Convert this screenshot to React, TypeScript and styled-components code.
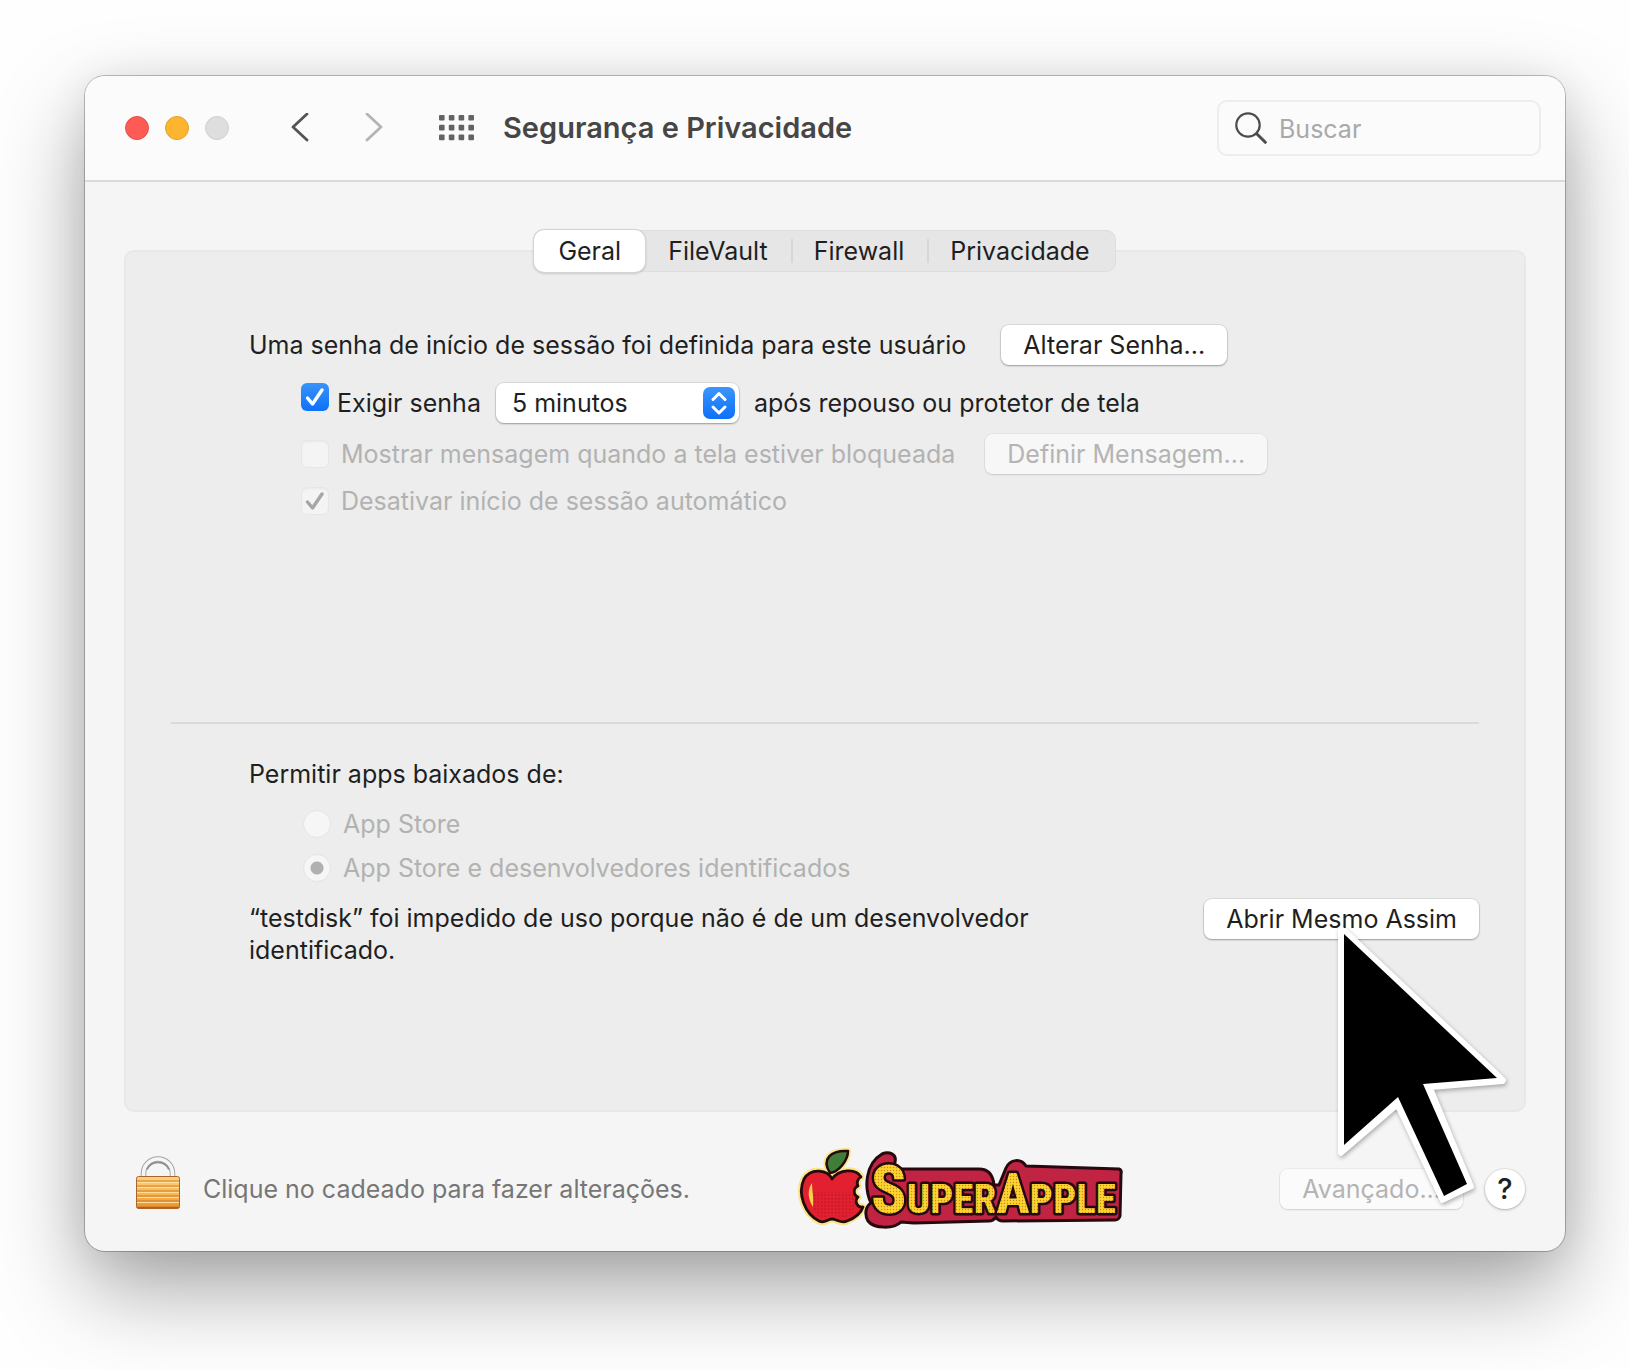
import React from 'react';
import styled, { createGlobalStyle, css } from 'styled-components';

const GlobalStyle = createGlobalStyle`
  *, *::before, *::after { box-sizing: border-box; }
  body {
    margin: 0;
    background: #fefefe;
    color: #1f1f1f;
    font-family: Inter, "Noto Sans", "Liberation Sans", sans-serif;
    font-size: 25px;
    line-height: 32px;
  }
  button, input, select { font: inherit; color: inherit; margin: 0; }
`;

const Desktop = styled.div`
  padding: 76px 64px 120px 85px;
  overflow: hidden;
`;

const Window = styled.main`
  border-radius: 20px;
  background: #f5f5f5;
  box-shadow:
    0 0 0 1px rgba(0, 0, 0, 0.24),
    0 4px 40px rgba(0, 0, 0, 0.08),
    0 38px 88px rgba(0, 0, 0, 0.35);
`;

const TitleBar = styled.header`
  display: flex;
  align-items: center;
  height: 106px;
  padding: 0 24px 0 40px;
  border-bottom: 2px solid #dadada;
  border-radius: 20px 20px 0 0;
  background: #fbfbfb;
`;

const Lights = styled.div`
  display: flex;
  gap: 16px;
`;

const Light = styled.button<{ $fill: string; $edge: string }>`
  width: 24px;
  height: 24px;
  padding: 0;
  border: 1px solid ${(p) => p.$edge};
  border-radius: 50%;
  background: ${(p) => p.$fill};
`;

const BarButton = styled.button<{ $tone: string }>`
  display: flex;
  padding: 0;
  border: 0;
  background: none;
  color: ${(p) => p.$tone};
`;

const Nav = styled.nav`
  display: flex;
  align-items: center;
  gap: 56px;
  margin: 0 28px 0 62px;
`;

const Title = styled.h1`
  flex: 1;
  margin: 0;
  color: #464646;
  font-size: 29px;
  font-weight: 600;
`;

const SearchBox = styled.label`
  display: flex;
  align-items: center;
  gap: 12px;
  width: 324px;
  height: 56px;
  padding: 0 16px;
  border: 2px solid #ededed;
  border-radius: 10px;
  color: #4c4c4c;
`;

const SearchInput = styled.input`
  flex: 1;
  min-width: 0;
  padding: 2px 0 0;
  border: 0;
  outline: 0;
  background: none;
  &::placeholder { color: #a9a9a9; opacity: 1; }
`;

const Body = styled.div`
  padding: 48px 39px 0;
`;

const Tabs = styled.div`
  position: relative;
  display: flex;
  width: fit-content;
  height: 42px;
  margin: 0 auto -22px;
  border-radius: 10px;
  background: #e6e6e6;
  box-shadow: inset 0 0 0 1px #dedede;
`;

const Tab = styled.button<{ $divided?: boolean }>`
  display: flex;
  align-items: center;
  padding: 0 23px;
  border: 0;
  background: none;
  &:last-child { padding-right: 26px; }
  &[aria-selected='true'] {
    padding: 0 24px;
    border-radius: 10px;
    background: #fff;
    box-shadow: 0 0 0 1px #d4d4d4, 0 1px 3px rgba(0, 0, 0, 0.3);
  }
  ${(p) =>
    p.$divided &&
    css`
      &::before {
        content: '';
        width: 2px;
        height: 24px;
        margin: 0 21px 0 -23px;
        background: #d6d6d6;
      }
    `}
`;

const Panel = styled.section`
  padding: 73px 45px 144px;
  border: 2px solid #e8e8e8;
  border-radius: 10px;
  background: #ededed;
`;

const Group = styled.div`
  padding: 0 0 0 78px;
`;

const Line = styled.div<{ $gap: number }>`
  display: flex;
  align-items: center;
  gap: ${(p) => p.$gap}px;
`;

const Options = styled.div<{ $gap: number; $indent: number }>`
  display: flex;
  flex-direction: column;
  gap: ${(p) => p.$gap}px;
  padding-left: ${(p) => p.$indent}px;
  margin-top: 18px;
`;

const Text = styled.p`
  margin: 0;
`;

const PushButton = styled.button`
  height: 40px;
  padding: 0 22px;
  border: 0;
  border-radius: 8px;
  background: #fff;
  white-space: nowrap;
  box-shadow: 0 0 0 1px rgba(0, 0, 0, 0.07), 0 1px 2px rgba(0, 0, 0, 0.3);
  &:disabled {
    color: #b4b4b4;
    background: rgba(255, 255, 255, 0.55);
    box-shadow: 0 0 0 1px rgba(0, 0, 0, 0.04), 0 1px 2px rgba(0, 0, 0, 0.12);
  }
`;

const Choice = styled.label<{ $gap: number; $disabled?: boolean }>`
  display: flex;
  align-items: center;
  gap: ${(p) => p.$gap}px;
  color: ${(p) => (p.$disabled ? '#b2b2b2' : 'inherit')};
`;

const Mark = styled.span<{ $raised?: boolean }>`
  display: grid;
  place-items: center;
  ${(p) => p.$raised && 'align-self: flex-start;'}
  & > * { grid-area: 1 / 1; }
  & > svg { pointer-events: none; }
`;

const Box = styled.input`
  appearance: none;
  width: 28px;
  height: 28px;
  border-radius: 6px;
  background: linear-gradient(#3993fb, #0d72fa);
  &:disabled {
    background: #f4f4f4;
    box-shadow: inset 0 0 0 1px #e6e6e6, inset 0 2px 2px #e8e8e8;
  }
`;

const Dot = styled.input`
  appearance: none;
  display: block;
  width: 28px;
  height: 28px;
  border: 1px solid #e5e5e5;
  border-radius: 50%;
  background: #f6f6f6;
  &:checked { background: radial-gradient(circle, #b0b0b0 6px, #f6f6f6 7px); }
`;

const PopUp = styled.span`
  display: grid;
  align-items: center;
  margin: 0 7px;
  & > * { grid-area: 1 / 1; }
  & > svg { justify-self: end; margin-right: 4px; pointer-events: none; }
`;

const Select = styled.select`
  appearance: none;
  width: 243px;
  height: 40px;
  padding: 0 44px 0 16px;
  border: 0;
  border-radius: 8px;
  background: #fff;
  box-shadow: 0 0 0 1px rgba(0, 0, 0, 0.07), 0 1px 2px rgba(0, 0, 0, 0.3);
`;

const Rule = styled.hr`
  height: 2px;
  margin: 205px 0 34px;
  border: 0;
  background: #dadada;
`;

const Blocked = styled.div`
  display: flex;
  align-items: flex-start;
  justify-content: space-between;
  margin-top: 15px;
`;

const BlockedText = styled.p`
  max-width: 850px;
  margin: 0;
  padding-top: 3px;
`;

const Target = styled.div`
  position: relative;
  display: flex;
`;

const Pointer = styled.svg`
  position: absolute;
  z-index: 1;
  top: 20px;
  left: 126px;
  pointer-events: none;
  filter: drop-shadow(1px 2px 2px rgba(0, 0, 0, 0.3));
`;

const Footer = styled.footer`
  display: flex;
  align-items: center;
  padding: 36px 40px 22px 51px;
`;

const LockLabel = styled.p`
  margin: 0 109px 0 23px;
  color: #767676;
`;

const FooterActions = styled.div`
  display: flex;
  align-items: center;
  gap: 22px;
  margin-left: auto;
`;

const Help = styled.button`
  width: 40px;
  height: 40px;
  padding: 0;
  border: 0;
  border-radius: 50%;
  background: #fff;
  font-weight: 500;
  font-size: 29px;
  box-shadow: 0 0 0 1px rgba(0, 0, 0, 0.05), 0 1px 3px rgba(0, 0, 0, 0.25);
`;

const LogoArt = styled.svg`
  overflow: visible;
`;

const Chevron = ({ flip }: { flip?: boolean }) => (
  <svg width="18" height="30" viewBox="0 0 18 30" fill="none" stroke="currentColor" strokeWidth="2.8" strokeLinecap="round" strokeLinejoin="round">
    <path d={flip ? 'M2 1 16 14 2 27' : 'M16 1 2 14 16 27'} />
  </svg>
);

const Dots = () => (
  <svg width="36" height="26" viewBox="0 0 36 26" fill="currentColor">
    {[0, 1, 2].map((r) =>
      [0, 1, 2, 3].map((c) => <rect key={`${r}${c}`} x={c * 9.8} y={r * 9.8} width="5.6" height="5.6" rx="1" />),
    )}
  </svg>
);

const Magnifier = () => (
  <svg width="32" height="32" viewBox="0 0 32 32" fill="none" stroke="currentColor" strokeLinecap="round">
    <circle cx="13" cy="13" r="11.7" strokeWidth="2.2" />
    <path d="m21.7 21.7 8.6 8.6" strokeWidth="3" />
  </svg>
);

const Check = ({ color }: { color: string }) => (
  <svg width="20" height="20" viewBox="0 0 20 20" fill="none" stroke={color} strokeWidth="3.4" strokeLinecap="round" strokeLinejoin="round">
    <path d="m2.5 11 5 6L17 3" />
  </svg>
);

const Stepper = () => (
  <svg width="32" height="32" viewBox="0 0 32 32" fill="none">
    <defs>
      <linearGradient id="stepper" x2="0" y2="1">
        <stop stopColor="#3c96fb" />
        <stop offset="1" stopColor="#0c70fa" />
      </linearGradient>
    </defs>
    <rect width="32" height="32" rx="7" fill="url(#stepper)" />
    <path d="m10 12.500 6-6 6 6M10 20l6 6 6-6" stroke="#fff" strokeWidth="3" strokeLinecap="round" strokeLinejoin="round" />
  </svg>
);

const Lock = () => (
  <svg width="44" height="66" viewBox="0 0 44 66" fill="none">
    <defs>
      <linearGradient id="brass" x2="0" y2="1">
        <stop stopColor="#ffd27c" />
        <stop offset="0.55" stopColor="#fbb54e" />
        <stop offset="1" stopColor="#e98f30" />
      </linearGradient>
    </defs>
    <path d="M7.500 21V17.500a14.500 14.500 0 0 1 29 0V21" stroke="#a4a4a8" strokeWidth="5.500" />
    <path d="M7.500 21V17.500a14.500 14.500 0 0 1 29 0V21" stroke="#f6f6f8" strokeWidth="3.600" />
    <path d="M11 13.500a12 12 0 0 1 22 0" stroke="#8e8e8e" strokeWidth="1.800" />
    <rect x="0.5" y="20.500" width="43" height="32" rx="2" fill="url(#brass)" stroke="#a8672a" />
    {[25, 30, 35, 40, 45].map((y) => (
      <path key={y} d={`M1 ${y}h42`} stroke="#c98236" strokeWidth="1.200" />
    ))}
    {[26, 31, 36, 41, 46].map((y) => (
      <path key={y} d={`M1 ${y + 0.5}h42`} stroke="#ffe09c" strokeWidth="1" />
    ))}
    <path d="M1 51.500h42" stroke="#b4601f" strokeWidth="1.500" />
  </svg>
);

const apple =
  'M33 31C29 22 12 19 5 31-2 46 6 66 20 73c6 3 8-2 13-2 5 0 9 5 15 2 8-3 14-8 16-14-6 1-9-6-5-10-5-2-5-9 0-11-2-3 0-8 3-9C57 20 40 21 33 31Z';
const leaf = 'M31 25C22 11 32 2 49 3 49 12 40 24 31 25Z';
const plate =
  'M83 6C90 3 98 6 96 14L95 21 180 21C190 21 194 27 195 37L200 37 207 20C211 11 222 10 227 18L320 21Q323 22 322 26L321 68Q320 72 316 72L204 73Q199 73 197 69 194 73 190 73L115 75 102 74C95 81 75 81 69 73 65 66 67 58 72 55 65 40 66 16 83 6Z';

const Logo = () => (
  <LogoArt width="324" height="81" viewBox="0 0 324 81" role="img" aria-label="Super Apple">
    <defs>
      <pattern id="gold" width="3" height="3" patternUnits="userSpaceOnUse">
        <rect width="3" height="3" fill="#fcd32f" />
        <circle cx="1.500" cy="1.500" r="0.7" fill="#c98a1c" />
      </pattern>
      <pattern id="ruby" width="3.500" height="3.500" patternUnits="userSpaceOnUse">
        <rect width="3.500" height="3.500" fill="#e3202f" />
        <circle cx="1.700" cy="1.700" r="0.8" fill="#b3142a" />
      </pattern>
    </defs>
    <g strokeLinejoin="round">
      <path d={apple} fill="#f9e58c" stroke="#f9e58c" strokeWidth="7" />
      <path d={leaf} fill="#f9e58c" stroke="#f9e58c" strokeWidth="6" />
      <path d={apple} fill="#e3202f" stroke="#240b0b" strokeWidth="2.800" />
      <path d="M15 44h38l2 7 1 12-9 7-14-3-12 4-8-12Z" fill="url(#ruby)" />
      <path d="M13 35c-5 7-4 16 1 24 1-9-1-16-1-24Z" fill="#fbd04a" />
      <path d={leaf} fill="#3f7d39" stroke="#240b0b" strokeWidth="2.500" />
      <path d={plate} fill="#c12443" stroke="#25090f" strokeWidth="3" />
    </g>
    <text
      x="72"
      y="65"
      fontFamily="'Liberation Sans Narrow', 'Roboto Condensed', Roboto, sans-serif"
      fontWeight="700"
      fontSize="41"
      fill="url(#gold)"
      stroke="#25090f"
      strokeWidth="5"
      strokeLinejoin="round"
      paintOrder="stroke"
    >
      <tspan fontSize="66">S</tspan>
      <tspan>UPER</tspan>
      <tspan fontSize="56">A</tspan>
      <tspan>PPLE</tspan>
    </text>
  </LogoArt>
);

const tabs = ['Geral', 'FileVault', 'Firewall', 'Privacidade'];

export default function App() {
  return (
    <>
      <GlobalStyle />
      <Desktop>
        <Window>
          <TitleBar>
            <Lights>
              <Light $fill="#fe5b54" $edge="#e5504a" aria-label="Fechar" />
              <Light $fill="#fdb42e" $edge="#e5a32c" aria-label="Minimizar" />
              <Light $fill="#dedede" $edge="#d0d0d0" aria-label="Zoom" disabled />
            </Lights>
            <Nav>
              <BarButton $tone="#545454" aria-label="Voltar"><Chevron /></BarButton>
              <BarButton $tone="#b4b4b4" aria-label="Avançar"><Chevron flip /></BarButton>
              <BarButton $tone="#636363" aria-label="Mostrar tudo"><Dots /></BarButton>
            </Nav>
            <Title>Segurança e Privacidade</Title>
            <SearchBox>
              <Magnifier />
              <SearchInput type="search" placeholder="Buscar" aria-label="Buscar" />
            </SearchBox>
          </TitleBar>

          <Body>
            <Tabs role="tablist">
              {tabs.map((t, i) => (
                <Tab key={t} role="tab" aria-selected={i === 0} $divided={i > 1}>{t}</Tab>
              ))}
            </Tabs>
            <Panel>
              <Group>
                <Line $gap={35}>
                  <Text>Uma senha de início de sessão foi definida para este usuário</Text>
                  <PushButton>Alterar Senha...</PushButton>
                </Line>
                <Options $gap={11} $indent={52}>
                  <Line $gap={8}>
                    <Mark $raised>
                      <Box id="require" type="checkbox" defaultChecked />
                      <Check color="#fff" />
                    </Mark>
                    <label htmlFor="require">Exigir senha</label>
                    <PopUp>
                      <Select aria-label="Intervalo" defaultValue="5">
                        <option value="5">5 minutos</option>
                        <option value="15">15 minutos</option>
                      </Select>
                      <Stepper />
                    </PopUp>
                    <Text>após repouso ou protetor de tela</Text>
                  </Line>
                  <Line $gap={30}>
                    <Choice $gap={12} $disabled>
                      <Mark><Box type="checkbox" disabled /></Mark>
                      Mostrar mensagem quando a tela estiver bloqueada
                    </Choice>
                    <PushButton disabled>Definir Mensagem...</PushButton>
                  </Line>
                  <Choice $gap={12} $disabled>
                    <Mark>
                      <Box type="checkbox" defaultChecked disabled />
                      <Check color="#a6a6a6" />
                    </Mark>
                    Desativar início de sessão automático
                  </Choice>
                </Options>
              </Group>
              <Rule />
              <Group>
                <Text>Permitir apps baixados de:</Text>
                <Options $gap={12} $indent={54}>
                  <Choice $gap={12} $disabled>
                    <Dot type="radio" name="source" disabled />
                    App Store
                  </Choice>
                  <Choice $gap={12} $disabled>
                    <Dot type="radio" name="source" defaultChecked disabled />
                    App Store e desenvolvedores identificados
                  </Choice>
                </Options>
                <Blocked>
                  <BlockedText>“testdisk” foi impedido de uso porque não é de um desenvolvedor identificado.</BlockedText>
                  <Target>
                    <PushButton>Abrir Mesmo Assim</PushButton>
                    <Pointer width="180" height="290" viewBox="0 0 180 290">
                      <path
                        d="M11 9 174 161 173 163 101 169 142 268 112 282 67 187 11 235 10 234V10Z"
                        fill="#fff"
                        stroke="#fff"
                        strokeWidth="4"
                        strokeLinejoin="round"
                      />
                      <path d="M14 15 167 159 93 165 137 265 114 277 68 178 14 226Z" fill="#000" stroke="#fff" strokeWidth="11" strokeLinejoin="round" paintOrder="stroke" />
                    </Pointer>
                  </Target>
                </Blocked>
              </Group>
            </Panel>
          </Body>

          <Footer>
            <Lock />
            <LockLabel>Clique no cadeado para fazer alterações.</LockLabel>
            <Logo />
            <FooterActions>
              <PushButton disabled>Avançado...</PushButton>
              <Help aria-label="Ajuda">?</Help>
            </FooterActions>
          </Footer>
        </Window>
      </Desktop>
    </>
  );
}
